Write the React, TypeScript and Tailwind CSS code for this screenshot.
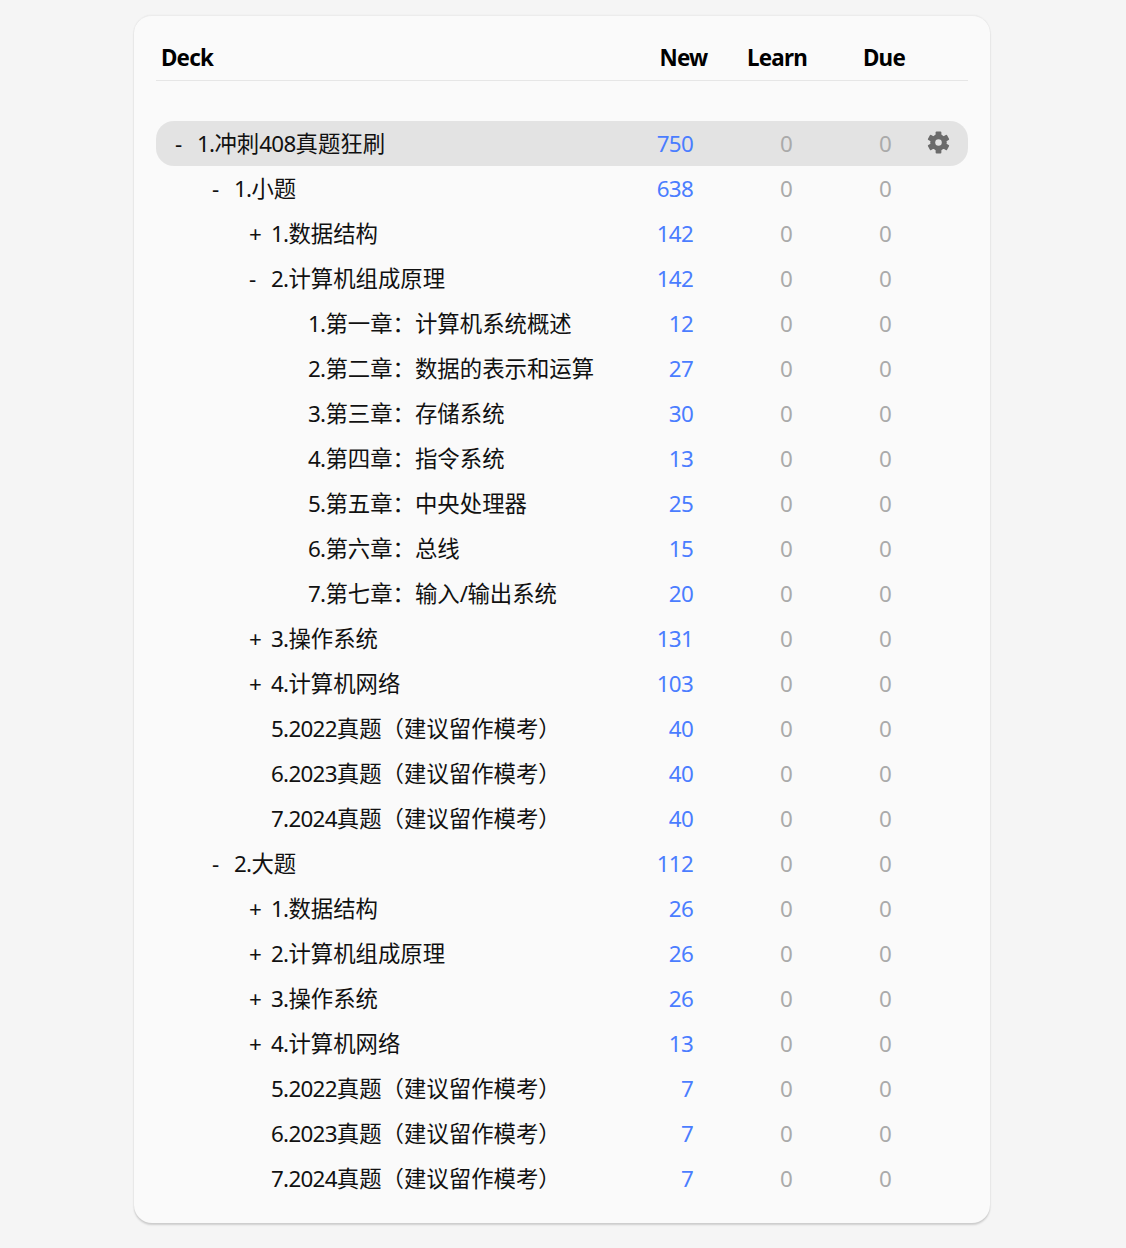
import { Fragment } from "react";

type DeckRow = {
	name: string;
	depth: number;
	toggle?: "+" | "-";
	count: number;
	active?: boolean;
};

const FONT = "font-['Noto_Sans','Noto_Sans_CJK_SC',sans-serif]";

const rows: DeckRow[] = [
	{ name: "1.冲刺408真题狂刷", depth: 0, toggle: "-", count: 750, active: true },
	{ name: "1.小题", depth: 1, toggle: "-", count: 638 },
	{ name: "1.数据结构", depth: 2, toggle: "+", count: 142 },
	{ name: "2.计算机组成原理", depth: 2, toggle: "-", count: 142 },
	{ name: "1.第一章：计算机系统概述", depth: 3, count: 12 },
	{ name: "2.第二章：数据的表示和运算", depth: 3, count: 27 },
	{ name: "3.第三章：存储系统", depth: 3, count: 30 },
	{ name: "4.第四章：指令系统", depth: 3, count: 13 },
	{ name: "5.第五章：中央处理器", depth: 3, count: 25 },
	{ name: "6.第六章：总线", depth: 3, count: 15 },
	{ name: "7.第七章：输入/输出系统", depth: 3, count: 20 },
	{ name: "3.操作系统", depth: 2, toggle: "+", count: 131 },
	{ name: "4.计算机网络", depth: 2, toggle: "+", count: 103 },
	{ name: "5.2022真题（建议留作模考）", depth: 2, count: 40 },
	{ name: "6.2023真题（建议留作模考）", depth: 2, count: 40 },
	{ name: "7.2024真题（建议留作模考）", depth: 2, count: 40 },
	{ name: "2.大题", depth: 1, toggle: "-", count: 112 },
	{ name: "1.数据结构", depth: 2, toggle: "+", count: 26 },
	{ name: "2.计算机组成原理", depth: 2, toggle: "+", count: 26 },
	{ name: "3.操作系统", depth: 2, toggle: "+", count: 26 },
	{ name: "4.计算机网络", depth: 2, toggle: "+", count: 13 },
	{ name: "5.2022真题（建议留作模考）", depth: 2, count: 7 },
	{ name: "6.2023真题（建议留作模考）", depth: 2, count: 7 },
	{ name: "7.2024真题（建议留作模考）", depth: 2, count: 7 },
];

const INDENTS = ["w-0", "w-[37px]", "w-[74px]", "w-[111px]"];

// latin runs are set tighter so digits keep the narrow widths next to the CJK text
const DeckName = ({ name }: { name: string }) => (
	<span>
		{name.split(/([\x00-\x7f]+)/).map((part, i) =>
			i % 2 ? (
				<span key={i} className="tracking-[-0.7px]">
					{part}
				</span>
			) : (
				<Fragment key={i}>{part}</Fragment>
			),
		)}
	</span>
);

const Gear = () => (
	<svg viewBox="0 0 24 24" className="size-[23px] fill-[#6b6b6b]">
		<circle cx="12" cy="12" r="8.6" />
		{[0, 60, 120].map((deg) => (
			<rect key={deg} x="9" y="0.5" width="6" height="23" rx="1" transform={`rotate(${deg} 12 12)`} />
		))}
		<circle cx="12" cy="12" r="3.4" className="fill-[#e3e3e3]" />
	</svg>
);

const Row = ({ row }: { row: DeckRow }) => (
	<div
		className={`grid h-[45px] grid-cols-[438px_99px_99px_99px_77px] items-center rounded-[18px] ${
			row.active ? "bg-[#e3e3e3]" : ""
		}`}
	>
		<div className="flex items-center pl-[19px] whitespace-nowrap text-[#111]">
			<span className={`shrink-0 ${INDENTS[row.depth]}`} />
			<span className="w-[22px] shrink-0">{row.toggle}</span>
			<DeckName name={row.name} />
		</div>
		<div className="text-right tracking-[-0.7px] text-[#4a7dff]">{row.count}</div>
		<div className="text-right tracking-[-0.7px] text-[#aaaaaa]">0</div>
		<div className="text-right tracking-[-0.7px] text-[#aaaaaa]">0</div>
		<div className="pb-[3px] pl-[36px]">{row.active && <Gear />}</div>
	</div>
);

export default function App() {
	return (
		<div className={`flex min-h-screen justify-center bg-[#f5f5f5] pt-[15px] pr-[2px] pb-[25px] text-[22.4px] ${FONT}`}>
			<div className="h-[1208px] w-[856px] rounded-[18px] border-t border-[#ececec] bg-[#fafafa] px-[22px] pt-[20px] shadow-[0_2px_2px_rgba(0,0,0,0.16),0_0_2px_rgba(0,0,0,0.06)]">
				<div className="mb-[40px] grid h-[45px] grid-cols-[1fr_99px_88px_126px_21px] items-center border-b border-[#e6e6e6] font-bold tracking-[-0.8px] text-black">
					<div className="pl-[5px]">Deck</div>
					<div className="text-center">New</div>
					<div className="text-center">Learn</div>
					<div className="text-center">Due</div>
					<div />
				</div>
				{rows.map((row, i) => (
					<Row key={i} row={row} />
				))}
			</div>
		</div>
	);
}
